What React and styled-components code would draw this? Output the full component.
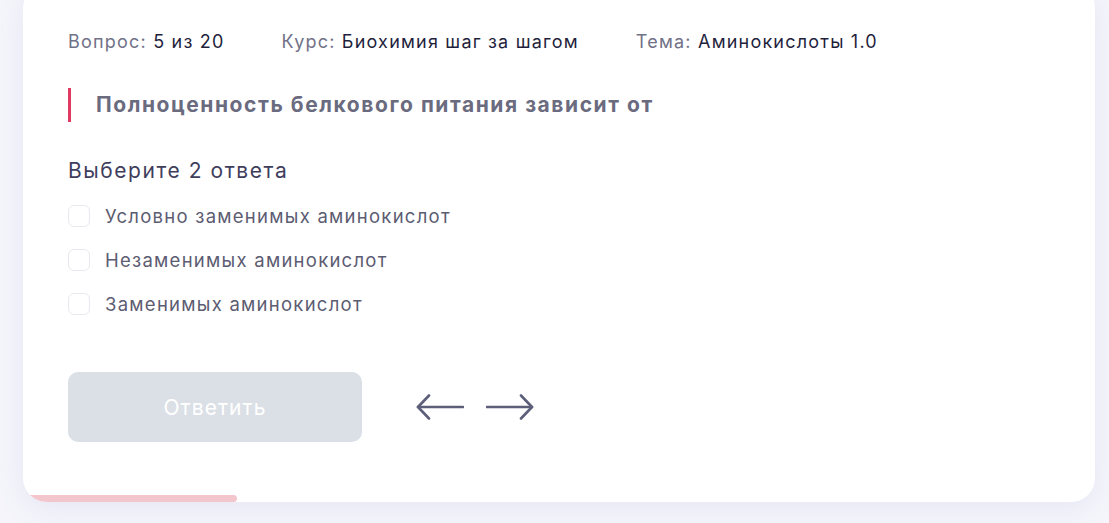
import React from "react";
import styled, { createGlobalStyle } from "styled-components";

const Global = createGlobalStyle`
  html, body { margin: 0; padding: 0; }
  body {
    background: #f5f5fb;
    font-family: Inter, "Noto Sans", sans-serif;
    letter-spacing: 0.065em;
    -webkit-font-smoothing: antialiased;
  }
`;

const Page = styled.div`
  padding: 0 14px 21px 23px;
  overflow: hidden;
`;

const Card = styled.section`
  position: relative;
  margin-top: -16px;
  background: #ffffff;
  border-radius: 24px;
  box-shadow: 0 6px 30px rgba(110, 110, 200, 0.1);
  overflow: hidden;
  padding: 46px 45px 60px;
  display: flex;
  flex-direction: column;
`;

const Meta = styled.div`
  display: flex;
  gap: 57px;
  font-size: 18px;
  line-height: 24px;
  letter-spacing: 0.067em;
`;

const MetaItem = styled.div`
  color: #717187;
  white-space: nowrap;
`;

const MetaValue = styled.span`
  color: #1f1f3d;
`;

const Question = styled.h2`
  margin: 34px 0 0;
  border-left: 3px solid #e03a63;
  padding-left: 25px;
  font-size: 21px;
  line-height: 34px;
  font-weight: 700;
  letter-spacing: 0.074em;
  color: #6b6b80;
`;

const Instruction = styled.div`
  margin-top: 35px;
  font-size: 21px;
  line-height: 28px;
  letter-spacing: 0.074em;
  color: #3e3e5c;
`;

const Options = styled.div`
  margin-top: 9px;
  display: flex;
  flex-direction: column;
`;

const Option = styled.label`
  display: flex;
  align-items: center;
  gap: 15px;
  height: 44px;
  font-size: 18.5px;
  letter-spacing: 0.068em;
  color: #5c5c72;
  cursor: pointer;
`;

const Box = styled.span`
  box-sizing: border-box;
  width: 22px;
  height: 22px;
  border: 1.5px solid #e8e8ee;
  border-radius: 6px;
  background: #fff;
  flex: none;
`;

const Actions = styled.div`
  margin-top: 46px;
  display: flex;
  align-items: center;
`;

const Submit = styled.button`
  width: 294px;
  height: 70px;
  border: none;
  border-radius: 10px;
  background: #dbe0e6;
  color: #ffffff;
  font-family: inherit;
  letter-spacing: inherit;
  font-size: 21px;
  cursor: default;
`;

const Nav = styled.div`
  display: flex;
  gap: 22px;
  margin-left: 54px;
`;

const ArrowButton = styled.button`
  width: 48px;
  height: 28px;
  padding: 0;
  border: none;
  background: none;
  display: flex;
  align-items: center;
  justify-content: center;
  color: #5d5f7a;
  cursor: pointer;
`;

const Progress = styled.div`
  position: absolute;
  left: 0;
  bottom: 0;
  height: 7px;
  background: #f3c6cd;
  border-radius: 0 4px 4px 0;
`;

const Arrow = ({ dir }) => (
  <svg width="48" height="26" viewBox="0 0 48 26" fill="none" stroke="currentColor" strokeWidth="2.6" strokeLinecap="round" strokeLinejoin="round">
    {dir === "left" ? (
      <>
        <path d="M2 13H47" />
        <path d="M13 1.5L2 13L13 24.5" />
      </>
    ) : (
      <>
        <path d="M1 13H46" />
        <path d="M35 1.5L46 13L35 24.5" />
      </>
    )}
  </svg>
);

const options = [
  "Условно заменимых аминокислот",
  "Незаменимых аминокислот",
  "Заменимых аминокислот",
];

export default function App() {
  const answered = 4;
  const total = 20;
  return (
    <Page>
      <Global />
      <Card>
        <Meta>
          <MetaItem>Вопрос: <MetaValue>5 из 20</MetaValue></MetaItem>
          <MetaItem>Курс: <MetaValue>Биохимия шаг за шагом</MetaValue></MetaItem>
          <MetaItem>Тема: <MetaValue>Аминокислоты 1.0</MetaValue></MetaItem>
        </Meta>
        <Question>Полноценность белкового питания зависит от</Question>
        <Instruction>Выберите 2 ответа</Instruction>
        <Options>
          {options.map((o) => (
            <Option key={o}>
              <Box />
              {o}
            </Option>
          ))}
        </Options>
        <Actions>
          <Submit>Ответить</Submit>
          <Nav>
            <ArrowButton aria-label="Назад"><Arrow dir="left" /></ArrowButton>
            <ArrowButton aria-label="Вперёд"><Arrow dir="right" /></ArrowButton>
          </Nav>
        </Actions>
        <Progress style={{ width: `${(answered / total) * 100}%` }} />
      </Card>
    </Page>
  );
}
